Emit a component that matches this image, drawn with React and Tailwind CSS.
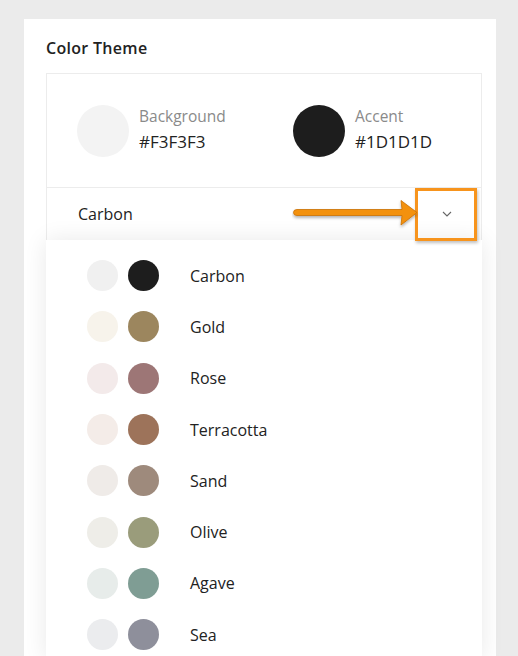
const themes = [
  { name: 'Carbon', light: '#f0f0f0', dark: '#1d1d1d' },
  { name: 'Gold', light: '#f7f3eb', dark: '#9c865e' },
  { name: 'Rose', light: '#f3eaea', dark: '#9d7676' },
  { name: 'Terracotta', light: '#f4ece8', dark: '#9d735a' },
  { name: 'Sand', light: '#efebe8', dark: '#9e8a7c' },
  { name: 'Olive', light: '#eeede8', dark: '#9a9c7b' },
  { name: 'Agave', light: '#e7ecea', dark: '#7f9d94' },
  { name: 'Sea', light: '#ebecee', dark: '#8e8f9b' }
];

const App = () => {
  return (
    <div className="min-h-[656px] h-[656px] overflow-hidden bg-[#ebebeb] pt-[19px] pl-[24px] font-['Open_Sans',sans-serif] text-[#222]">
      <div className="w-[472px] h-[637px] bg-white pl-[22px] pr-[14px] pt-[19px]">
        <h2 className="text-[16px] font-semibold leading-[20px] text-[#222] tracking-[0.3px]">Color Theme</h2>

        {/* Theme card */}
        <div className="relative mt-[15px] border border-[#ececec] border-b-0">
          <div className="h-[113px] flex items-center pl-[30px]">
            <div className="flex items-center w-[216px]">
              <div className="w-[52px] h-[52px] rounded-full bg-[#f3f3f3]" />
              <div className="ml-[10px] mb-[4px]">
                <p className="text-[15.5px] leading-[20px] text-[#8a8a8a]">Background</p>
                <p className="text-[17px] leading-[20px] mt-[6px] text-[#222]">#F3F3F3</p>
              </div>
            </div>
            <div className="flex items-center">
              <div className="w-[52px] h-[52px] rounded-full bg-[#1d1d1d]" />
              <div className="ml-[10px] mb-[4px]">
                <p className="text-[15.5px] leading-[20px] text-[#8a8a8a]">Accent</p>
                <p className="text-[17px] leading-[20px] mt-[6px] text-[#222]">#1D1D1D</p>
              </div>
            </div>
          </div>

          {/* Select row */}
          <div className="relative h-[53px] border-t border-[#ececec] flex items-center justify-between pl-[31px] pr-[28px]">
            <span className="text-[16px] text-[#222] mb-[1px]">Carbon</span>
            <svg width="10" height="6" viewBox="0 0 10 6" className="mr-[1px]">
              <path d="M1 1l4 4 4-4" fill="none" stroke="#666" strokeWidth="1.1" />
            </svg>

            {/* annotation box */}
            <div className="absolute right-[4px] top-0 w-[62px] h-[53px] border-[3px] border-[#f7941d] shadow-[1px_2px_3px_rgba(0,0,0,0.25)] z-20" />
            {/* annotation arrow */}
            <svg className="absolute left-[245px] top-[10px] z-20" width="130" height="32" viewBox="0 0 130 32">
              <defs>
                <filter id="sh" x="-10%" y="-30%" width="120%" height="180%">
                  <feDropShadow dx="0" dy="2" stdDeviation="1.5" floodColor="#000" floodOpacity="0.3" />
                </filter>
              </defs>
              <path
                d="M5 11.5 L110 11.5 L109 2.5 L125 14.5 L109 27 L110 17.5 L5 17.5 Q1.5 17.5 1.5 14.5 Q1.5 11.5 5 11.5 Z"
                fill="#f39110"
                stroke="#c96f00"
                strokeWidth="0.8"
                strokeLinejoin="round"
                filter="url(#sh)"
              />
            </svg>

            {/* dropdown menu */}
            <div className="absolute left-[-1px] right-[-1px] top-full z-10 bg-white pt-[10px] shadow-[0_0_22px_rgba(0,0,0,0.09)]">
              {themes.map((t) => (
                <div key={t.name} className="h-[51.3px] flex items-center pl-[41px]">
                  <div className="w-[31px] h-[31px] rounded-full" style={{ backgroundColor: t.light }} />
                  <div className="w-[31px] h-[31px] rounded-full ml-[10px]" style={{ backgroundColor: t.dark }} />
                  <span className="ml-[31px] text-[16px] text-[#222]">{t.name}</span>
                </div>
              ))}
            </div>
          </div>

          {/* content under the menu */}
          <div className="h-[118px]" />
          <div className="h-[188px] border-x border-[#d8d8d8] -mx-px" />
        </div>
      </div>
    </div>
  );
};

export default App;
